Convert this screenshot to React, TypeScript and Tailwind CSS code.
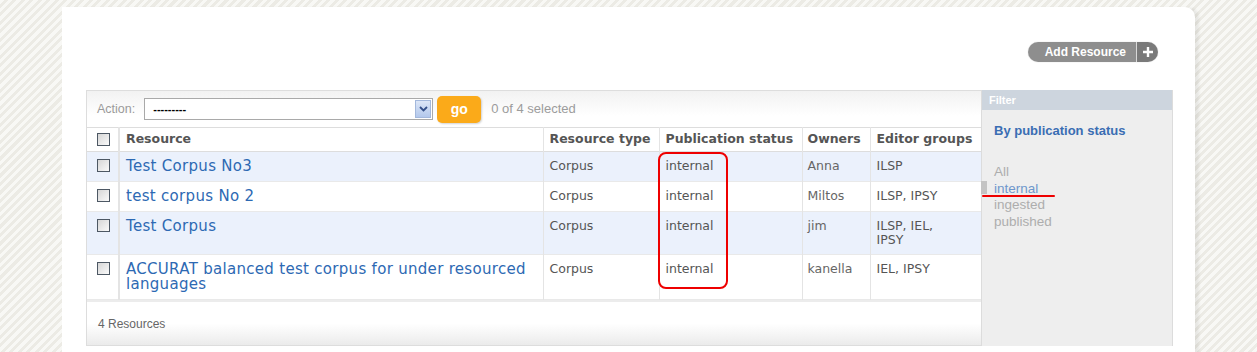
import React from "react";

const rows = [
  { title: "Test Corpus No3", owner: "Anna", groups: ["ILSP"] },
  { title: "test corpus No 2", owner: "Miltos", groups: ["ILSP, IPSY"] },
  { title: "Test Corpus", owner: "jim", groups: ["ILSP, IEL,", "IPSY"] },
  {
    title: "ACCURAT balanced test corpus for under resourced languages",
    owner: "kanella",
    groups: ["IEL, IPSY"],
  },
];

const Checkbox = () => (
  <span className="block w-[13px] h-[13px] border border-[#4d5864] bg-[linear-gradient(135deg,#d6d6d6,#fafafa)]" />
);

const AddResource = () => (
  <div className="flex h-[20px] rounded-full overflow-hidden font-['Liberation_Sans',sans-serif] shadow-[0_0_1px_rgba(0,0,0,0.3)]">
    <span className="flex items-center pl-[17px] pr-[10px] bg-[#8e8e8e] text-white text-[12px] font-bold">
      Add Resource
    </span>
    <span className="w-px bg-[#d8d8d8]" />
    <span className="flex items-center justify-center w-[21px] bg-[#7a7a7a]">
      <svg width="12" height="12" viewBox="0 0 12 12">
        <path d="M6 1v10M1 6h10" stroke="#fff" strokeWidth="2.4" />
      </svg>
    </span>
  </div>
);

const ActionBar = () => (
  <div className="flex items-center h-[36px] pl-[10px] bg-[linear-gradient(to_bottom,#f2f2f2,#ffffff_70%)] font-['Liberation_Sans',sans-serif]">
    <span className="text-[12.5px] text-[#9a9a9a]">Action:</span>
    <div className="ml-[9px] flex items-center w-[289px] h-[22px] border border-[#a9a9a9] bg-white">
      <span className="flex-1 pl-[8px] text-[11px] font-bold text-black leading-none">---------</span>
      <span className="flex items-center justify-center w-[16px] h-[18px] mr-px border border-[#a3b8dc] bg-[linear-gradient(to_bottom,#dce6f7,#b3c8ec)]">
        <svg width="9" height="6" viewBox="0 0 9 6">
          <path d="M1 1l3.5 3.5L8 1" fill="none" stroke="#34508a" strokeWidth="1.8" />
        </svg>
      </span>
    </div>
    <button className="ml-[4px] w-[44px] h-[27px] rounded-[5px] bg-[#fbaa19] text-white text-[14px] font-bold shadow-[1px_1px_2px_rgba(0,0,0,0.18)]">
      go
    </button>
    <span className="ml-[10px] text-[13px] text-[#9c9c9c]">0 of 4 selected</span>
  </div>
);

const ResultTable = () => (
  <table className="w-[894px] table-fixed border-collapse font-['DejaVu_Sans',sans-serif]">
    <colgroup>
      <col className="w-[32px]" />
      <col className="w-[424px]" />
      <col className="w-[116px]" />
      <col className="w-[143px]" />
      <col className="w-[68px]" />
      <col className="w-[111px]" />
    </colgroup>
    <thead>
      <tr className="h-[24px] border-y border-[#dddddd] text-left text-[12.5px] font-bold text-[#555]">
        <th className="pl-[10px] border-r-2 border-[#e4e4e4]">
          <Checkbox />
        </th>
        <th className="px-[6px] font-bold border-r border-[#e4e4e4]">Resource</th>
        <th className="px-[6px] font-bold border-r border-[#e4e4e4]">Resource type</th>
        <th className="px-[6px] font-bold border-r border-[#e4e4e4]">Publication status</th>
        <th className="px-[5px] font-bold border-r border-[#e4e4e4]">Owners</th>
        <th className="px-[6px] font-bold">Editor groups</th>
      </tr>
    </thead>
    <tbody>
      {rows.map((r, i) => (
        <tr
          key={i}
          className={`${i % 2 === 0 ? "bg-[#ebf1fc]" : "bg-white"} border-b border-[#e9e9e9] align-top text-[12.5px] leading-[14px] text-[#555]`}
        >
          <td className="pl-[10px] pt-[7px] border-r-2 border-[#e4e4e4]">
            <Checkbox />
          </td>
          <td className="px-[6px] pt-[7px] pb-[7px] border-r border-[#e4e4e4] text-[15px] leading-[15px] tracking-[0.3px] text-[#2d69b3]">
            {r.title}
          </td>
          <td className="px-[6px] pt-[7px] border-r border-[#e4e4e4]">Corpus</td>
          <td className="px-[6px] pt-[7px] border-r border-[#e4e4e4]">internal</td>
          <td className="px-[5px] pt-[7px] border-r border-[#e4e4e4] text-[#666]">{r.owner}</td>
          <td className="px-[6px] pt-[7px] pb-[7px]">
            {r.groups.map((g, j) => (
              <div key={j}>{g}</div>
            ))}
          </td>
        </tr>
      ))}
    </tbody>
  </table>
);

const FilterPanel = () => (
  <div className="w-[193px] bg-[#eeeeee] border-l border-r border-[#dcdcdc] font-['Liberation_Sans',sans-serif]">
    <div className="h-[20px] flex items-center pl-[7px] bg-[#cdd5de] text-white text-[11px] font-bold">
      Filter
    </div>
    <div className="pl-[12px] pt-[13px]">
      <h3 className="text-[13px] font-bold text-[#3a6db3] leading-[16px]">By publication status</h3>
      <ul className="mt-[25px] text-[13.5px] leading-[16.5px] text-[#adadad]">
        <li>All</li>
        <li className="text-[#6f97cc]">internal</li>
        <li>ingested</li>
        <li>published</li>
      </ul>
    </div>
  </div>
);

export default function App() {
  return (
    <div className="h-[352px] overflow-hidden bg-[repeating-linear-gradient(135deg,#f8f8f5_0px,#f8f8f5_3px,#ecebe5_3px,#ecebe5_6px)]">
      <div className="ml-[62px] mt-[7px] w-[1133px] h-[400px] bg-white rounded-tr-[10px] shadow-[5px_0_3px_-1px_rgba(0,0,0,0.07)] pt-[35px] pl-[24px] pr-[22px]">
        <div className="flex justify-end pr-[15px]">
          <AddResource />
        </div>
        <div className="relative mt-[28px] flex">
          <div className="flex-1 border-l border-t border-[#dddddd]">
            <ActionBar />
            <ResultTable />
            <div className="h-[46px] flex items-center pl-[11px] border-t-2 border-[#ececec] border-b border-b-[#dddddd] bg-[linear-gradient(to_bottom,#ffffff_0%,#ffffff_50%,#ebebeb_100%)] font-['Liberation_Sans',sans-serif] text-[12px] text-[#666]">
              4 Resources
            </div>
          </div>
          <FilterPanel />
          {/* annotations drawn over the screenshot */}
          <div className="absolute left-[572px] top-[62px] w-[70px] h-[137px] border-2 border-[#ee0000] rounded-[8px]" />
          <div className="absolute left-[895px] top-[91px] w-[6px] h-[13px] bg-[#c4c4c4]" />
          <div className="absolute left-[896px] top-[105px] w-[73px] h-[2px] bg-[#ee0000] rounded-full" />
        </div>
      </div>
    </div>
  );
}
